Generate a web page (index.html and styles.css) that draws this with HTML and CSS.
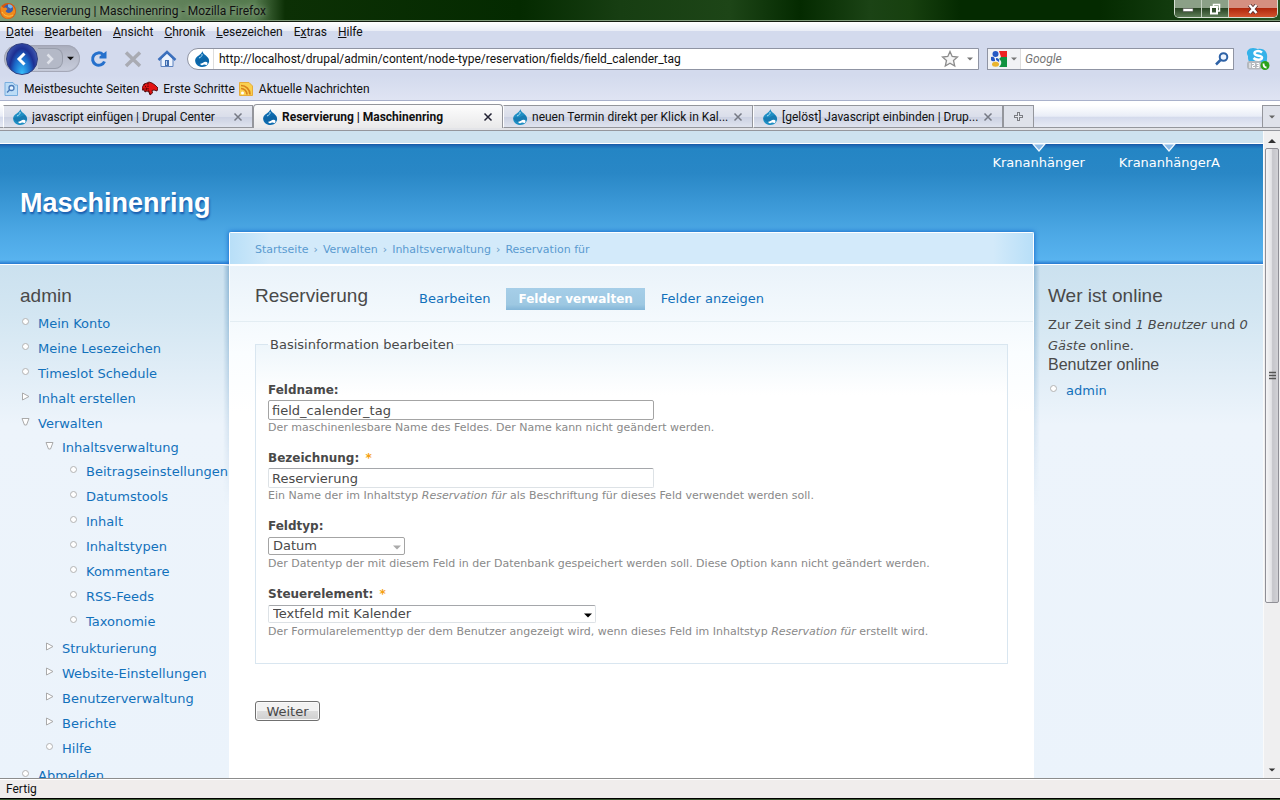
FILE: index.html
```html
<!DOCTYPE html>
<html lang="de">
<head>
<meta charset="utf-8">
<title>Reservierung | Maschinenring</title>
<link rel="stylesheet" href="styles.css">
</head>
<body>
<svg class="defs" aria-hidden="true">
  <symbol id="drop" viewBox="0 0 16 16">
    <path d="M8.500 0C8.500 3 13 4.500 14.500 7.500C16.500 12 13 16 8.500 16C4 16 .5 12.500 1.300 8.500C2 5 7.500 4 8.500 0Z"/>
    <path d="M1 9C3 7.500 6 8.500 8 8C10.500 7 11 6 13 6C15 8 15.500 10 15 11.500C13.500 10 11.500 10.500 9.500 12C7 13.800 3 13.500 1 9Z" fill="#0b5a96" opacity=".35"/>
    <path d="M6.500 12.600C8 13 9.500 10.800 11.500 10.800C13.500 10.800 14.200 12.500 13 13.800C12 14.500 11 13.300 10 13.500C9 13.800 8.500 14.500 7.500 14.300C6.500 14 6 13 6.500 12.600Z" fill="#fff"/>
    <path d="M8 3C8.500 5 7 6 5 7" fill="none" stroke="#b5dff4"/>
  </symbol>
  <symbol id="cross" viewBox="0 0 10 10"><path d="M1.500 1.500L8.500 8.500M8.500 1.500L1.500 8.500" fill="none" stroke="currentColor" stroke-width="1.500"/></symbol>
  <symbol id="down" viewBox="0 0 8 5"><path d="M0 .5H8L4 4.500Z" fill="currentColor"/></symbol>
  <symbol id="leaf" viewBox="0 0 9 9"><circle cx="4.500" cy="4.500" r="3" fill="#fff" stroke="#b3b3b3"/></symbol>
  <symbol id="closed" viewBox="0 0 9 9"><path d="M1.500 1L8 4.500L1.500 8Z" fill="#fff" stroke="#aaa" stroke-linejoin="round"/></symbol>
  <symbol id="open" viewBox="0 0 9 9"><path d="M1 1.500H8L5.500 8H3.500Z" fill="#fff" stroke="#aaa" stroke-linejoin="round"/></symbol>
  <symbol id="notch" viewBox="0 0 14 8"><path d="M1 0L7 7L13 0Z" fill="#8dbbe6" stroke="#f2f9ff" stroke-width="1.200"/></symbol>
</svg>
<div class="window">
  <div class="titlebar">
    <svg class="icon16" viewBox="0 0 16 16"><circle cx="8" cy="8" r="8" fill="#d9570d"/><circle cx="8.500" cy="6.500" r="5" fill="#3a5fae"/><path d="M8 1.500C10 1 12 2 13 4L10.500 5.500L8 4Z" fill="#79b6e8"/><path d="M1 3L3.500 5C5 4 6.500 4.500 7.500 6L5.500 8C7 10.500 10.500 10.500 12.500 8C13.500 6 13 4 12.500 3C15 5 15.500 8 15 10C13.500 14 10 16 6.500 15.500C2 14 -.5 9 1 3Z" fill="#f08a1c"/><path d="M2 9C4 13 9 14.500 13 12" fill="none" stroke="#fbc34a"/></svg>
    <span class="title">Reservierung | Maschinenring - Mozilla Firefox</span>
    <div class="controls">
      <button class="ctl" aria-label="Minimieren"><svg width="12" height="8" viewBox="0 0 12 8"><path d="M1 3.500H11V6.500H1Z" fill="#fff" stroke="#555" stroke-width=".6"/></svg></button>
      <button class="ctl" aria-label="Wiederherstellen"><svg width="12" height="12" viewBox="0 0 12 12"><path d="M4.500 3V1.500H10.500V8H9" fill="none" stroke="#fff" stroke-width="1.500"/><path d="M2 4H8V10.500H2Z" fill="none" stroke="#fff" stroke-width="2"/></svg></button>
      <button class="ctl ctl-close" aria-label="Schließen"><svg width="12" height="10" viewBox="0 0 12 10"><path d="M2.500 1L9.500 9M9.500 1L2.500 9" stroke="#563030" stroke-width="4"/><path d="M2.500 1L9.500 9M9.500 1L2.500 9" stroke="#fff" stroke-width="2.500"/></svg></button>
    </div>
  </div>
  <nav class="menubar" aria-label="Menü">
    <a href="#"><u>D</u>atei</a><a href="#"><u>B</u>earbeiten</a><a href="#"><u>A</u>nsicht</a><a href="#"><u>C</u>hronik</a><a href="#"><u>L</u>esezeichen</a><a href="#">E<u>x</u>tras</a><a href="#"><u>H</u>ilfe</a>
  </nav>
  <div class="toolbar">
    <div class="history">
      <button class="back" aria-label="Zurück"><svg width="16" height="16" viewBox="0 0 16 16"><path d="M10.500 2.500L5 8L10.500 13.500" fill="none" stroke="#fff" stroke-width="3"/></svg></button>
      <button class="forward" aria-label="Vor"><svg width="12" height="12" viewBox="0 0 12 12"><path d="M3.500 1.500L8 6L3.500 10.500" fill="none" stroke="#dfe2ea" stroke-width="2.500"/></svg></button>
      <button class="recent" aria-label="Verlauf"><svg width="7" height="5"><use href="#down"/></svg></button>
    </div>
    <button class="tool" aria-label="Neu laden"><svg width="18" height="18" viewBox="0 0 18 18"><path d="M14.500 11.500A6.200 6.200 0 1 1 13 4.500" fill="none" stroke="#2570cc" stroke-width="3"/><path d="M16.500 1V8.500H9.500V6.500Z" fill="#2570cc"/></svg></button>
    <button class="tool" aria-label="Stopp"><svg width="18" height="18" viewBox="0 0 18 18"><path d="M2 2.500L16 16M16 2.500L2 16" stroke="#a9abb3" stroke-width="3.500"/></svg></button>
    <button class="tool" aria-label="Startseite"><svg width="20" height="18" viewBox="0 0 20 18"><path d="M4 9L10 3L16 9V16.500H4Z" fill="#edf3fd" stroke="#5d83c0"/><path d="M1.500 10L10 2L18.500 10" fill="none" stroke="#3c70bd" stroke-width="2.500"/><path d="M8 10H12V16H8Z" fill="#436fb0"/><path d="M9.500 11V15" stroke="#bcd1ee"/></svg></button>
    <div class="urlbar">
      <svg class="icon16 blue"><use href="#drop"/></svg>
      <input class="url" aria-label="Adresse" value="http://localhost/drupal/admin/content/node-type/reservation/fields/field_calender_tag">
      <svg width="18" height="18" viewBox="0 0 18 18"><path d="M9 1.500L11.200 6.500L16.500 7L12.500 10.500L13.700 16L9 13.200L4.300 16L5.500 10.500L1.500 7L6.800 6.500Z" fill="#f5f5f5" stroke="#8c8c8c" stroke-width="1.300"/></svg>
      <svg class="urlarrow" width="6" height="4"><use href="#down"/></svg>
    </div>
    <div class="search">
      <div class="engine">
        <svg class="icon16" viewBox="0 0 16 16"><path d="M8 0H16V6H10Z" fill="#e22"/><path d="M10 6H16V16H8C11 13 11 10 8 8Z" fill="#109240"/><ellipse cx="4.500" cy="3" rx="3" ry="3" fill="#2457c4"/><path d="M0 6Q4 5 4 10Q1 11 0 9Z" fill="#2457c4"/><path d="M5 7Q9 7 8 11L5 9Z" fill="#2457c4"/><ellipse cx="4.500" cy="13.300" rx="3.500" ry="2.500" fill="#eab42d"/></svg>
        <svg width="6" height="4"><use href="#down"/></svg>
      </div>
      <input class="query" aria-label="Suche" placeholder="Google">
      <svg class="lens" width="14" height="14" viewBox="0 0 14 14"><circle cx="8.500" cy="5" r="3.800" fill="#eef5ff" stroke="#2e62a6" stroke-width="2"/><path d="M5.500 8L1 12.500" stroke="#2e62a6" stroke-width="2.500"/></svg>
    </div>
    <button class="skype" aria-label="Skype"><svg width="24" height="24" viewBox="0 0 24 24"><path d="M4 1.500C8 0 11 2 12 2C19 1 22 6 21 12C21 17 17 19 12 19C5 19 1.500 15 2 9C0 6 1 3 4 1.500Z" fill="#35b2e9"/><path d="M16 5.500C13 3 8 4 8.500 6.500C9 9.500 16 8 16 10.500C16 13.500 10 13.500 7.500 11" fill="none" stroke="#fff" stroke-width="2.500"/><rect x="1" y="14" width="15" height="8.500" rx="3" fill="#b4b8bd"/><path d="M4 16V21M6 16.500H8.500V18.500H6.500V20.500H9M10.500 16.500H13V20.500H10.500M11 18.500H13" fill="none" stroke="#fff"/><circle cx="19" cy="18.500" r="4.500" fill="#2ba21b"/><path d="M17.500 16.500C17.500 19 18.500 20.500 20.500 20.500" fill="none" stroke="#fff" stroke-width="1.800"/></svg></button>
  </div>
  <nav class="bookmarks" aria-label="Lesezeichen">
    <a href="#"><svg class="icon16" viewBox="0 0 16 16"><path d="M2 1.500H10L12 4H14.500V14.500H2Z" fill="#bcdcf6" stroke="#78aede"/><circle cx="8.500" cy="7" r="2.500" fill="#e6f3ff" stroke="#4b7ab8" stroke-width="1.300"/><path d="M6.500 9L4 11.500" stroke="#4b7ab8" stroke-width="1.500"/></svg>Meistbesuchte Seiten</a>
    <a href="#"><svg class="icon16" viewBox="0 0 16 16"><path d="M0 7L2 3L5 2L7 1L10 2L13 4L16 7L15 10L12 9L10 9.500L10.500 12L8 14L7 11L5 10L3 11L2 9L0 9Z" fill="#e31313" stroke="#400" stroke-width=".8"/><path d="M2 3L5 8L3 11M6 2L6 8L8 13M1 8H5" fill="none" stroke="#300" stroke-width=".9" stroke-dasharray="1.500 1"/></svg>Erste Schritte</a>
    <a href="#"><svg class="icon16" viewBox="0 0 16 16"><path d="M1.500 1.500H11L14.500 5V14.500H1.500Z" fill="#fad04f" stroke="#e7ac3a"/><circle cx="4.500" cy="12" r="1.500" fill="#fff"/><path d="M3 7.500A6 6 0 0 1 9 13.500M3 4.500A9 9 0 0 1 12 13.500" fill="none" stroke="#d9821b" stroke-width="1.700"/></svg>Aktuelle Nachrichten</a>
  </nav>
  <div class="tabs">
    <div class="tab"><svg class="icon16"><use href="#drop"/></svg><span>javascript einfügen | Drupal Center</span><button aria-label="Tab schließen"><svg width="10" height="10"><use href="#cross"/></svg></button></div>
    <div class="tab active"><svg class="icon16 blue"><use href="#drop"/></svg><span>Reservierung | Maschinenring</span><button aria-label="Tab schließen"><svg width="10" height="10"><use href="#cross"/></svg></button></div>
    <div class="tab"><svg class="icon16"><use href="#drop"/></svg><span>neuen Termin direkt per Klick in Kal...</span><button aria-label="Tab schließen"><svg width="10" height="10"><use href="#cross"/></svg></button></div>
    <div class="tab"><svg class="icon16"><use href="#drop"/></svg><span>[gelöst] Javascript einbinden | Drup...</span><button aria-label="Tab schließen"><svg width="10" height="10"><use href="#cross"/></svg></button></div>
    <button class="newtab" aria-label="Neuer Tab"><svg width="9" height="9" viewBox="0 0 9 9"><path d="M4.500 0V9M0 4.500H9" stroke="#7b7d83" stroke-width="3"/><path d="M4.500 1V8M1 4.500H8" stroke="#e6e8ee"/></svg></button>
    <button class="alltabs" aria-label="Alle Tabs"><svg width="6" height="4"><use href="#down"/></svg></button>
  </div>
  <div class="viewport">
    <div class="page">
      <header class="header">
        <ul class="primary">
          <li><svg width="14" height="8"><use href="#notch"/></svg><a href="#">Krananhänger</a></li>
          <li><svg width="14" height="8"><use href="#notch"/></svg><a href="#">KrananhängerA</a></li>
        </ul>
        <h1><a href="#">Maschinenring</a></h1>
      </header>
      <div class="columns">
        <aside class="side left">
          <h2>admin</h2>
          <ul class="menu">
            <li><svg><use href="#leaf"/></svg><a href="#">Mein Konto</a></li>
            <li><svg><use href="#leaf"/></svg><a href="#">Meine Lesezeichen</a></li>
            <li><svg><use href="#leaf"/></svg><a href="#">Timeslot Schedule</a></li>
            <li><svg><use href="#closed"/></svg><a href="#">Inhalt erstellen</a></li>
            <li><svg><use href="#open"/></svg><a href="#">Verwalten</a>
              <ul class="menu">
                <li><svg><use href="#open"/></svg><a href="#">Inhaltsverwaltung</a>
                  <ul class="menu">
                    <li><svg><use href="#leaf"/></svg><a href="#">Beitragseinstellungen</a></li>
                    <li><svg><use href="#leaf"/></svg><a href="#">Datumstools</a></li>
                    <li><svg><use href="#leaf"/></svg><a href="#">Inhalt</a></li>
                    <li><svg><use href="#leaf"/></svg><a href="#">Inhaltstypen</a></li>
                    <li><svg><use href="#leaf"/></svg><a href="#">Kommentare</a></li>
                    <li><svg><use href="#leaf"/></svg><a href="#">RSS-Feeds</a></li>
                    <li><svg><use href="#leaf"/></svg><a href="#">Taxonomie</a></li>
                  </ul>
                </li>
                <li><svg><use href="#closed"/></svg><a href="#">Strukturierung</a></li>
                <li><svg><use href="#closed"/></svg><a href="#">Website-Einstellungen</a></li>
                <li><svg><use href="#closed"/></svg><a href="#">Benutzerverwaltung</a></li>
                <li><svg><use href="#closed"/></svg><a href="#">Berichte</a></li>
                <li><svg><use href="#leaf"/></svg><a href="#">Hilfe</a></li>
              </ul>
            </li>
            <li><svg><use href="#leaf"/></svg><a href="#">Abmelden</a></li>
          </ul>
        </aside>
        <main class="center">
          <nav class="breadcrumb" aria-label="Pfad"><a href="#">Startseite</a><span>›</span><a href="#">Verwalten</a><span>›</span><a href="#">Inhaltsverwaltung</a><span>›</span><a href="#">Reservation für</a></nav>
          <div class="heading">
            <h2>Reservierung</h2>
            <ul class="localtabs">
              <li><a href="#">Bearbeiten</a></li>
              <li><a href="#" class="current">Felder verwalten</a></li>
              <li><a href="#">Felder anzeigen</a></li>
            </ul>
          </div>
          <form class="form">
            <fieldset>
              <legend>Basisinformation bearbeiten</legend>
              <div class="item">
                <label for="name">Feldname:</label>
                <input class="text locked" id="name" value="field_calender_tag" readonly>
                <p>Der maschinenlesbare Name des Feldes. Der Name kann nicht geändert werden.</p>
              </div>
              <div class="item">
                <label for="label">Bezeichnung: <b>*</b></label>
                <input class="text" id="label" value="Reservierung">
                <p>Ein Name der im Inhaltstyp <em>Reservation für</em> als Beschriftung für dieses Feld verwendet werden soll.</p>
              </div>
              <div class="item">
                <label for="type">Feldtyp:</label>
                <div class="pick short"><select class="locked" id="type" disabled><option>Datum</option></select><svg><use href="#down"/></svg></div>
                <p>Der Datentyp der mit diesem Feld in der Datenbank gespeichert werden soll. Diese Option kann nicht geändert werden.</p>
              </div>
              <div class="item">
                <label for="widget">Steuerelement: <b>*</b></label>
                <div class="pick"><select id="widget"><option>Textfeld mit Kalender</option></select><svg><use href="#down"/></svg></div>
                <p>Der Formularelementtyp der dem Benutzer angezeigt wird, wenn dieses Feld im Inhaltstyp <em>Reservation für</em> erstellt wird.</p>
              </div>
            </fieldset>
            <button type="button" class="submit">Weiter</button>
          </form>
        </main>
        <aside class="side right">
          <h2>Wer ist online</h2>
          <p>Zur Zeit sind <em>1 Benutzer</em> und <em>0 Gäste</em> online.</p>
          <h3>Benutzer online</h3>
          <ul class="menu"><li><svg><use href="#leaf"/></svg><a href="#">admin</a></li></ul>
        </aside>
      </div>
    </div>
    <div class="scrollbar">
      <svg width="8" height="4" viewBox="0 0 8 4"><path d="M0 4L4 0L8 4Z" fill="#333"/></svg>
      <div class="track"><div class="thumb"><svg width="7" height="9" viewBox="0 0 7 9"><path d="M0 1.500H7M0 4.500H7M0 7.500H7" stroke="#555" stroke-width="1.500"/></svg></div></div>
      <svg width="8" height="4"><use href="#down"/></svg>
    </div>
  </div>
  <div class="status">Fertig</div>
  <div class="desktop"></div>
</div>
</body>
</html>
```
FILE: styles.css
```css
* { box-sizing: border-box; }
body { margin: 0; font: 12px/16px Roboto, "Open Sans", sans-serif; color: #111; }
ul { list-style: none; margin: 0; padding: 0; }
a { color: inherit; text-decoration: none; }
button { border: 0; padding: 0; background: none; color: inherit; font: inherit; display: flex; align-items: center; justify-content: center; flex: none; }
input { min-width: 0; font: inherit; color: inherit; }
svg { flex: none; display: block; }
.defs { position: absolute; width: 0; height: 0; }
.icon16 { width: 16px; height: 16px; fill: #1f8fc4; }
.window { display: flex; flex-direction: column; height: 100vh; overflow: hidden; background: #d3daed; }

/* Window frame */
.titlebar { display: flex; align-items: center; gap: 5px; height: 22px; flex: none; overflow: hidden; border-bottom: 1px solid #111b0e; box-shadow: inset 0 -1px #7f9a7a; background: linear-gradient(90deg, #7d9c78 0, #5c7d55 200px, #547a4d 255px, #0c3005 285px, #042a00 520px, #173e12 620px, #1d4517 730px, #042a00 800px, #1b4315 870px, #17400f 910px, #042a00 960px, #042a00 1100px, #275523 100%); }
.title { text-shadow: 0 0 6px #b8cab4; }
.controls { display: flex; align-self: flex-start; margin-left: auto; margin-right: 2px; border: 1px solid #d6e0d4; border-top: 0; border-radius: 0 0 5px 5px; overflow: hidden; }
.ctl { width: 27px; height: 17px; background: linear-gradient(#8ba087 45%, #284423 50%, #5e7d58); border-right: 1px solid #c4d0c1; }
.ctl-close { width: 48px; border: 0; background: linear-gradient(#d58f80 45%, #b0280d 50%, #d3542e); }
.menubar { display: flex; gap: 11px; height: 20px; flex: none; align-items: center; padding: 0 6px; background: linear-gradient(#fff, #e9edf6 45%, #d3daed 46%); }
.toolbar { display: flex; align-items: center; height: 33px; flex: none; padding: 0 10px 0 4px; }
.history { display: flex; align-items: center; width: 76px; height: 27px; border-radius: 14px; padding-left: 2px; background: linear-gradient(#a9adbc, #c9cedd); box-shadow: inset 0 0 1px 1px #a1a5b4; margin-right: 9px; }
.back { width: 32px; height: 32px; border-radius: 50%; border: 1px solid #303f80; background: radial-gradient(ellipse at 50% 100%, #37c0fb, #1b68c8 40%, #1d2f92 60%, #5a78c8); }
.forward { width: 25px; height: 21px; border: 1px solid #999eac; border-left: 0; background: #b4b9c7; border-radius: 0 8px 8px 0; }
.recent { width: 15px; }
.tool { width: 20px; height: 20px; margin-right: 14px; }
.urlbar { display: flex; align-items: center; flex: 1; height: 22px; background: #fff; border: 1px solid #8f94a3; border-radius: 11px 0 0 11px; padding: 0 5px 0 6px; margin-left: -4px; }
.blue { fill: #0d6cb0; }
.url { flex: 1; border: 0; outline: 0; padding: 0 0 0 5px; margin-left: 3px; border-left: 1px solid #ddd; height: 20px; background: transparent; }
.urlarrow { margin-left: 8px; color: #777; }
.search { display: flex; align-items: center; width: 247px; height: 22px; border: 1px solid #8f94a3; background: #fff; margin-left: 8px; padding-right: 4px; }
.engine { display: flex; align-items: center; gap: 4px; height: 20px; width: 33px; padding-left: 3px; background: #f1f2f5; border-right: 1px solid #ddd; color: #777; }
.query { flex: 1; border: 0; outline: 0; padding: 0 4px; font-style: italic; background: transparent; }
.query::placeholder { color: #777; opacity: 1; }
.skype { margin-left: 12px; }
.bookmarks { display: flex; align-items: center; gap: 3px; height: 26px; flex: none; padding: 2px 3px 0; border-bottom: 1px solid #a9b1cb; background: linear-gradient(#d3daed, #dfe4f3); }
.bookmarks a { display: flex; align-items: center; gap: 5px; }
.tabs { display: flex; align-items: flex-end; height: 29px; flex: none; padding-left: 3px; border-top: 1px solid #fff; border-bottom: 2px solid #e3e4e8; box-shadow: inset 0 -1px #94969c; background: linear-gradient(#fff 12%, #e9edf7 55%, #d4daec 58%, #e9ecf5); }
.tab { display: flex; align-items: center; width: 250px; height: 23px; padding: 0 9px 0 8px; border: 1px solid #94969c; border-left-color: #fff; background: linear-gradient(#e5e7ef, #dadeea 50%, #cbd1e2 52%, #dfe3ee); }
.tab span { flex: 1; margin-left: 4px; white-space: nowrap; overflow: hidden; }
.tab button { color: #767a85; }
.tab.active { height: 24px; border-bottom: 0; border-left-color: #94969c; border-radius: 4px 4px 0 0; background: linear-gradient(#fdfdfd, #e9e9ea); font-weight: bold; }
.tab.active button { color: #223; }
.newtab { width: 31px; height: 23px; border: 1px solid #94969c; background: #dfe2ea; }
.alltabs { width: 18px; height: 23px; border: 1px solid #94969c; border-right: 0; background: #dfe2ea; color: #666; margin-left: auto; }
.status { flex: none; height: 20px; padding: 2px 6px; border-top: 1px solid #8c8c8c; background: #f0edec; box-shadow: inset 0 1px #fff; }
.desktop { flex: none; height: 2px; background: #38552f; border-top: 1px solid #000; }

/* Web page */
.viewport { display: flex; flex: 1; min-height: 0; overflow: hidden; border-top: 1px solid #94969c; }
.page { flex: 1; min-width: 0; overflow: hidden; font: 13px/21px "DejaVu Sans", sans-serif; color: #494949; background: #edf5fa; display: flex; flex-direction: column; }
.page a { color: #1271bb; }
.page h2, .page h3 { margin: 0; font-family: "Liberation Sans", sans-serif; font-weight: normal; }
.page h2 { font-size: 19px; line-height: 25px; }
.page h3 { font-size: 16px; line-height: 17px; }
.header { flex: none; border-top: 12px solid #cde2ef; box-shadow: inset 0 1px #fff, inset 0 -1px #fff; background: linear-gradient(#fff 1px, #1757a5 1px, #1c6fb9 3px, #2485c4 6px, #2987c6 30px, #4ca8e5 90px, #58b3ef 117px, #2678d0 121px); height: 134px; }
.primary { display: flex; justify-content: flex-end; gap: 34px; padding: 1px 43px 0 0; height: 39px; }
.primary li { display: flex; flex-direction: column; align-items: center; line-height: 22px; }
.header .primary a, .header h1 a { color: #fff; }
.header h1 { margin: 0; padding-left: 20px; font: bold 27px/43px "Liberation Sans", sans-serif; text-shadow: 1px 2px 2px #1659ac; }
.columns { flex: 1; display: grid; grid-template-columns: 229px minmax(0, 1fr) 229px; min-height: 0; }
.side { background: linear-gradient(#cbe1ef, #d3e6f2 50px, #edf4fb 160px, #ebf3fb); padding: 18px 0 0 20px; }
.side h2 { margin-bottom: 3px; }
.right { padding: 18px 14px 0; }
.right h2 { margin-bottom: 6px; }
.right p { margin: 0; }
.right h3 { margin-bottom: 5px; }
.menu li { line-height: 25px; padding-left: 18px; }
.menu svg { float: left; width: 9px; height: 9px; margin: 6px 0 0 -17px; }
.menu .menu { margin: -1px 0 2px 6px; }
.center { margin-top: -33px; position: relative; z-index: 0; background: linear-gradient(#fff 33px, #eaf3fa 33px, #fafdff 120px, #fff 180px); border: 1px solid #fff; border-bottom: 0; border-radius: 2px 2px 0 0; }
.center::before, .center::after { content: ""; position: absolute; z-index: -1; pointer-events: none; }
.center::before { inset: -1px -1px auto; height: 33px; box-shadow: 0 0 5px #0d5fc8; clip-path: inset(-6px -6px 0); }
/* Side shadows that fade out down the column */
.center::after { inset: 33px -7px auto; height: 240px; background: linear-gradient(90deg, transparent, rgb(50 120 175 / 40%) 6px, transparent 6px, transparent calc(100% - 6px), rgb(50 120 175 / 40%) calc(100% - 6px), transparent); mask-image: linear-gradient(#000, transparent); }
.breadcrumb { display: flex; gap: 5px; height: 32px; padding: 0 25px; font-size: 11px; line-height: 33px; color: #6a9dc8; background: linear-gradient(90deg, #b8dff8, #d3eafa 40px, #d3eafa calc(100% - 40px), #b8dff8); border-bottom: 1px solid #fff; }
.page .breadcrumb a { color: #5a9ad0; }
.heading { display: flex; align-items: flex-start; gap: 39px; height: 57px; padding: 18px 25px 0; border-bottom: 1px solid #e3edf3; }
.localtabs { display: flex; gap: 4px; padding-top: 5px; }
.localtabs a { display: block; padding: 0 12px; line-height: 22px; }
.page .localtabs .current { color: #fff; font-weight: bold; font-size: 12px; background: linear-gradient(#a6cee8, #9dc8e2 75%, #84b6d8); }
.form { padding: 12px 25px; }
.form fieldset { margin: 0 0 37px; padding: 26px 12px 10px; border: 1px solid #d9e6f0; background: linear-gradient(#eef6fb, #fff 50px); min-width: 0; }
.form legend { padding: 0 2px; line-height: 21px; }
.item { margin-bottom: 14px; }
.item label { display: block; font-weight: bold; font-size: 12px; line-height: 19px; }
.item b { color: #f5a010; padding-left: 2px; }
.item p { margin: 0; font-size: 11px; line-height: 15px; color: #898989; }
.text { display: block; width: 386px; max-width: 100%; height: 20px; padding: 0 3px; border: 1px solid #dde2e6; border-top-color: #a5a7ab; border-radius: 2px; background: #fff; line-height: 18px; }
.page .locked { border-color: #a4a4a4; }
.pick { display: grid; width: 328px; max-width: 100%; align-items: center; margin: 1px 0; }
.short { width: 137px; }
.pick select { grid-area: 1 / 1; appearance: none; height: 18px; padding: 0 4px; border: 1px solid #dde2e6; border-top-color: #a5a7ab; border-radius: 2px; background: #fff; font: inherit; line-height: 16px; color: #494949; opacity: 1; }
.pick svg { grid-area: 1 / 1; justify-self: end; width: 8px; height: 5px; margin: 3px 4px 0 0; pointer-events: none; color: #000; }
.short svg { color: #aaa; }
.submit { height: 20px; width: 65px; border: 1px solid #707070; border-radius: 3px; box-shadow: inset 0 0 0 1px #fafafa; background: linear-gradient(#f2f2f2 50%, #dcdcdc 51%, #d0d0d0); }

/* Scroll bar */
.scrollbar { flex: none; width: 17px; padding: 8px 1px 6px; display: flex; flex-direction: column; align-items: center; gap: 5px; background: #efeff0; border-left: 1px solid #fafafa; color: #333; }
.track { flex: 1; align-self: stretch; }
.thumb { height: 74%; display: flex; align-items: center; justify-content: center; border: 1px solid #8f8f96; border-radius: 2px; background: linear-gradient(90deg, #f5f5f6, #e3e3e6 45%, #c6c6cb 55%, #d2d2d6); }
```
